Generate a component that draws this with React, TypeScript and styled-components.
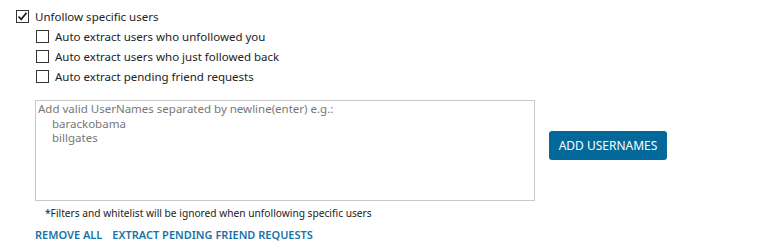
import styled, { createGlobalStyle } from "styled-components";

const GlobalStyle = createGlobalStyle`
  body {
    margin: 0;
    background: #fff;
    font-family: "Noto Sans", "Open Sans", sans-serif;
    color: #222;
  }
`;

const options = [
  "Auto extract users who unfollowed you",
  "Auto extract users who just followed back",
  "Auto extract pending friend requests",
];

const Check = ({ checked }: { checked?: boolean }) => (
  <Box>
    {checked && (
      <svg width="11" height="11" viewBox="0 0 11 11">
        <path d="M1.5 5.5 L4.2 8.3 L9.5 1.8" fill="none" stroke="#222" strokeWidth="1.8" />
      </svg>
    )}
  </Box>
);

const App = () => {
  return (
    <>
      <GlobalStyle />
      <Page>
        <Row>
          <Check checked />
          <Label>Unfollow specific users</Label>
        </Row>
        <SubList>
          {options.map((text, i) => (
            <Row key={i}>
              <Check />
              <Label>{text}</Label>
            </Row>
          ))}
        </SubList>
        <InputRow>
          <Area>
            <Hint>Add valid UserNames separated by newline(enter) e.g.:</Hint>
            <HintIndent>barackobama</HintIndent>
            <HintIndent>billgates</HintIndent>
          </Area>
          <AddButton>ADD USERNAMES</AddButton>
        </InputRow>
        <Note>*Filters and whitelist will be ignored when unfollowing specific users</Note>
        <Links>
          <LinkText>REMOVE ALL</LinkText>
          <LinkText>EXTRACT PENDING FRIEND REQUESTS</LinkText>
        </Links>
      </Page>
    </>
  );
};

const Page = styled.div`
  padding: 6px 0 0 16px;
  font-size: 11.5px;
`;

const Row = styled.div`
  display: flex;
  align-items: center;
  height: 20px;
  gap: 6px;
`;

const Box = styled.span`
  width: 11px;
  height: 11px;
  border: 1px solid #333;
  display: flex;
  align-items: center;
  justify-content: center;
  background: #fff;
`;

const Label = styled.span`
  color: #222;
`;

const SubList = styled.div`
  margin-left: 20px;
`;

const InputRow = styled.div`
  display: flex;
  align-items: center;
  gap: 14px;
  margin: 14px 0 0 19px;
`;

const Area = styled.div`
  width: 494px;
  height: 97px;
  border: 1px solid #c8c8c8;
  padding: 1px 2px;
  color: #777;
  line-height: 14px;
`;

const Hint = styled.div`
  margin-bottom: 1px;
`;

const HintIndent = styled.div`
  padding-left: 14px;
`;

const AddButton = styled.button`
  width: 118px;
  height: 29px;
  margin-top: -10px;
  border: none;
  border-radius: 3px;
  background: #03699a;
  color: #fff;
  font-family: inherit;
  font-size: 12px;
  cursor: pointer;
`;

const Note = styled.div`
  margin: 5px 0 0 29px;
  font-size: 10.2px;
  color: #222;
`;

const Links = styled.div`
  display: flex;
  gap: 10px;
  margin: 7px 0 0 19px;
`;

const LinkText = styled.a`
  color: #1873a8;
  font-weight: 600;
  font-size: 11px;
  cursor: pointer;
`;

export default App;
